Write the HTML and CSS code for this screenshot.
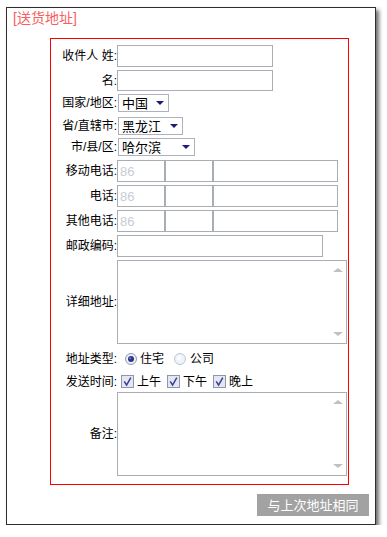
FILE: index.html
```html
<!DOCTYPE html>
<html lang="zh-CN">
<head>
    <meta charset="UTF-8">
    <meta name="viewport" content="width=device-width, initial-scale=1.0">
    <title>送货地址</title>
    <link rel="stylesheet" href="styles.css">
</head>
<body>
    <div class="address-box">
        <div class="box-title">[送货地址]</div>

        <form class="address-form">
            <div class="row">
                <span class="label">收件人 姓:</span>
                <input type="text" class="text w-name">
            </div>
            <div class="row row-name2">
                <span class="label">名:</span>
                <input type="text" class="text w-name h21">
            </div>

            <div class="row row-sel1">
                <span class="label">国家/地区:</span>
                <span class="select-wrap"><select class="select w-country"><option>中国</option></select></span>
            </div>
            <div class="row row-sel2">
                <span class="label">省/直辖市:</span>
                <span class="select-wrap"><select class="select w-province"><option>黑龙江</option></select></span>
            </div>
            <div class="row row-sel3">
                <span class="label">市/县/区:</span>
                <span class="select-wrap"><select class="select w-city"><option>哈尔滨</option></select></span>
            </div>

            <div class="row">
                <span class="label">移动电话:</span>
                <input type="text" class="text phone-code" placeholder="86">
                <input type="text" class="text phone-area">
                <input type="text" class="text phone-num">
            </div>
            <div class="row">
                <span class="label">电话:</span>
                <input type="text" class="text phone-code" placeholder="86">
                <input type="text" class="text phone-area">
                <input type="text" class="text phone-num">
            </div>
            <div class="row">
                <span class="label">其他电话:</span>
                <input type="text" class="text phone-code" placeholder="86">
                <input type="text" class="text phone-area">
                <input type="text" class="text phone-num">
            </div>
            <div class="row">
                <span class="label">邮政编码:</span>
                <input type="text" class="text w-zip">
            </div>

            <div class="row row-area">
                <span class="label">详细地址:</span>
                <span class="area-wrap">
                    <textarea class="area"></textarea>
                    <span class="scroll-up"></span>
                    <span class="scroll-down"></span>
                </span>
            </div>

            <div class="row row-type">
                <span class="label">地址类型:</span>
                <label class="choice radio-first">
                    <input type="radio" name="type" checked>
                    <svg class="mark" width="12" height="12" viewBox="0 0 12 12">
                        <circle cx="6" cy="6" r="5.5" fill="#eef1f7" stroke="#8d9ab2"/>
                        <circle cx="6" cy="6" r="3" fill="#2b3487"/>
                        <circle cx="5.2" cy="5.2" r="1" fill="#7d86c8"/>
                    </svg>住宅
                </label>
                <label class="choice radio-second">
                    <input type="radio" name="type">
                    <svg class="mark" width="12" height="12" viewBox="0 0 12 12">
                        <circle cx="6" cy="6" r="5.5" fill="#eef3f9" stroke="#b9c6d6"/>
                        <circle cx="5" cy="5" r="2.5" fill="#f8fbff"/>
                    </svg>公司
                </label>
            </div>

            <div class="row row-time">
                <span class="label">发送时间:</span>
                <label class="choice check-first">
                    <input type="checkbox" checked>
                    <svg class="mark" width="13" height="13" viewBox="0 0 13 13">
                        <rect x="0.5" y="0.5" width="12" height="12" fill="#e4e7ef" stroke="#8b97ad"/>
                        <path d="M3.2 6.4 L5.6 10 L9.8 2.6" fill="none" stroke="#3c3f9a" stroke-width="1.5"/>
                    </svg>上午
                </label>
                <label class="choice">
                    <input type="checkbox" checked>
                    <svg class="mark" width="13" height="13" viewBox="0 0 13 13">
                        <rect x="0.5" y="0.5" width="12" height="12" fill="#e4e7ef" stroke="#8b97ad"/>
                        <path d="M3.2 6.4 L5.6 10 L9.8 2.6" fill="none" stroke="#3c3f9a" stroke-width="1.5"/>
                    </svg>下午
                </label>
                <label class="choice">
                    <input type="checkbox" checked>
                    <svg class="mark" width="13" height="13" viewBox="0 0 13 13">
                        <rect x="0.5" y="0.5" width="12" height="12" fill="#e4e7ef" stroke="#8b97ad"/>
                        <path d="M3.2 6.4 L5.6 10 L9.8 2.6" fill="none" stroke="#3c3f9a" stroke-width="1.5"/>
                    </svg>晚上
                </label>
            </div>

            <div class="row row-note">
                <span class="label">备注:</span>
                <span class="area-wrap">
                    <textarea class="area"></textarea>
                    <span class="scroll-up"></span>
                    <span class="scroll-down"></span>
                </span>
            </div>
        </form>

        <div class="actions">
            <button type="button" class="same-button">与上次地址相同</button>
        </div>
    </div>
</body>
</html>
```

FILE: styles.css
```css
* {
    margin: 0;
    padding: 0;
    box-sizing: border-box;
}

body {
    font-family: 'Liberation Sans', 'Noto Sans CJK SC', sans-serif;
    font-size: 12px;
    color: #000;
    background: #fff;
}

.address-box {
    width: 370px;
    height: 518px;
    margin: 7px 0 0 6px;
    padding: 2px 6px 0 6px;
    border: 1px solid #2e2e2e;
    background: #fff;
    box-shadow: 3px 3px 4px #6e6e6e;
}

.box-title {
    font-size: 14px;
    line-height: 16px;
    height: 16px;
    color: #f66060;
}

.address-form {
    width: 299px;
    margin: 12px 0 0 37px;
    padding: 6px 0 8px 0;
    border: 1px solid #f00;
}

.row {
    display: flex;
    align-items: center;
    margin-bottom: 3px;
}

.label {
    width: 66px;
    flex-shrink: 0;
    text-align: right;
    line-height: 14px;
}

.text {
    height: 22px;
    border: 1px solid #a8aeb4;
    background: #fff;
    font-family: 'Liberation Sans', sans-serif;
    font-size: 13px;
    padding: 0 2px;
    outline: none;
}

.text::placeholder {
    color: #c8ccd4;
}

.h21 {
    height: 21px;
}

.w-name {
    width: 156px;
}

.w-zip {
    width: 206px;
}

.phone-code,
.phone-area {
    width: 48px;
}

.phone-num {
    width: 125px;
}

.row-sel1 {
    margin-bottom: 5px;
}

.row-sel3 {
    margin-bottom: 4px;
}

.select-wrap {
    position: relative;
    display: block;
    margin-left: 1px;
}

.select-wrap::after {
    content: '';
    position: absolute;
    right: 5px;
    top: 7px;
    border-left: 4px solid transparent;
    border-right: 4px solid transparent;
    border-top: 4px solid #1c1c74;
}

.select {
    appearance: none;
    -webkit-appearance: none;
    display: block;
    height: 18px;
    border: 1px solid #aeb2bc;
    border-radius: 0;
    background: #fff;
    font-family: 'Noto Sans CJK SC', sans-serif;
    font-size: 13px;
    line-height: 16px;
    color: #000;
    padding: 0 0 0 3px;
    outline: none;
}

.w-country {
    width: 51px;
}

.w-province {
    width: 65px;
}

.w-city {
    width: 77px;
}

.area-wrap {
    position: relative;
    display: block;
}

.area {
    display: block;
    width: 230px;
    height: 84px;
    border: 1px solid #a8aeb4;
    resize: none;
    overflow: hidden;
    outline: none;
}

.scroll-up,
.scroll-down {
    position: absolute;
    right: 4px;
    border-left: 5px solid transparent;
    border-right: 5px solid transparent;
}

.scroll-up {
    top: 8px;
    border-bottom: 4px solid #c0c0c0;
}

.scroll-down {
    bottom: 8px;
    border-top: 4px solid #c0c0c0;
}

.row-area {
    margin-bottom: 3px;
}

.row-type {
    height: 24px;
    margin-bottom: 0;
}

.row-time {
    height: 21px;
    margin-bottom: 0;
}

.row-note {
    margin-bottom: 0;
}

.choice {
    display: flex;
    align-items: center;
    margin-right: 6px;
    line-height: 14px;
    white-space: nowrap;
}

.choice input {
    display: none;
}

.choice .mark {
    display: block;
    margin-right: 3px;
}

.radio-first {
    margin-left: 8px;
    margin-right: 10px;
}

.radio-second .mark {
    margin-right: 4px;
}

.check-first {
    margin-left: 4px;
}

.actions {
    margin-top: 9px;
    text-align: right;
}

.same-button {
    width: 112px;
    height: 22px;
    border: none;
    background: #a2a2a2;
    color: #fff;
    font-family: 'Noto Sans CJK SC', sans-serif;
    font-size: 13px;
    line-height: 22px;
    cursor: pointer;
}
```
